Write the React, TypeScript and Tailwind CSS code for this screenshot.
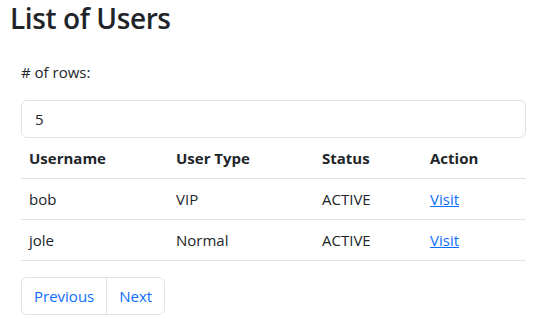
import React from "react";

const rows = [
  { username: "bob", type: "VIP", status: "ACTIVE" },
  { username: "jole", type: "Normal", status: "ACTIVE" },
];

export default function App() {
  return (
    <div
      className="bg-white text-[#212529] text-[15px] leading-[24px] w-[537px] h-[319px] overflow-hidden"
      style={{ fontFamily: '"Segoe UI", "Open Sans", "Noto Sans", sans-serif' }}
    >
      <div className="px-[10px]">
        <h3 className="text-[28px] leading-[34px] font-semibold m-0 pt-[1px] tracking-[-0.4px]">List of Users</h3>
      </div>
      <div className="px-[21px] pt-[25px] w-[505px] box-content">
        <label className="block mb-[16px]"># of rows:</label>
        <input
          className="block w-full h-[38px] border border-[#dee2e6] rounded-[6px] px-[13px] text-[15px] outline-none"
          defaultValue="5"
        />
        <table className="w-[505px] border-collapse table-fixed">
          <colgroup>
            <col className="w-[147px]" />
            <col className="w-[146px]" />
            <col className="w-[108px]" />
            <col className="w-[104px]" />
          </colgroup>
          <thead>
            <tr className="border-b border-[#dee2e6] h-[40px]">
              <th className="text-left font-bold px-[8px] py-[8px]">Username</th>
              <th className="text-left font-bold px-[8px] py-[8px]">User Type</th>
              <th className="text-left font-bold px-[8px] py-[8px]">Status</th>
              <th className="text-left font-bold px-[8px] py-[8px]">Action</th>
            </tr>
          </thead>
          <tbody>
            {rows.map((r) => (
              <tr key={r.username} className="border-b border-[#dee2e6] h-[41px]">
                <td className="px-[8px] py-[8px]">{r.username}</td>
                <td className="px-[8px] py-[8px]">{r.type}</td>
                <td className="px-[8px] py-[8px]">{r.status}</td>
                <td className="px-[8px] py-[8px]">
                  <a href="#" className="text-[#0d6efd] underline">Visit</a>
                </td>
              </tr>
            ))}
          </tbody>
        </table>
        <div className="mt-[16px] flex">
          <div className="flex border border-[#dee2e6] rounded-[6px] h-[38px] text-[#0d6efd]">
            <span className="px-[12px] flex items-center border-r border-[#dee2e6]">Previous</span>
            <span className="px-[12px] flex items-center">Next</span>
          </div>
        </div>
      </div>
    </div>
  );
}
